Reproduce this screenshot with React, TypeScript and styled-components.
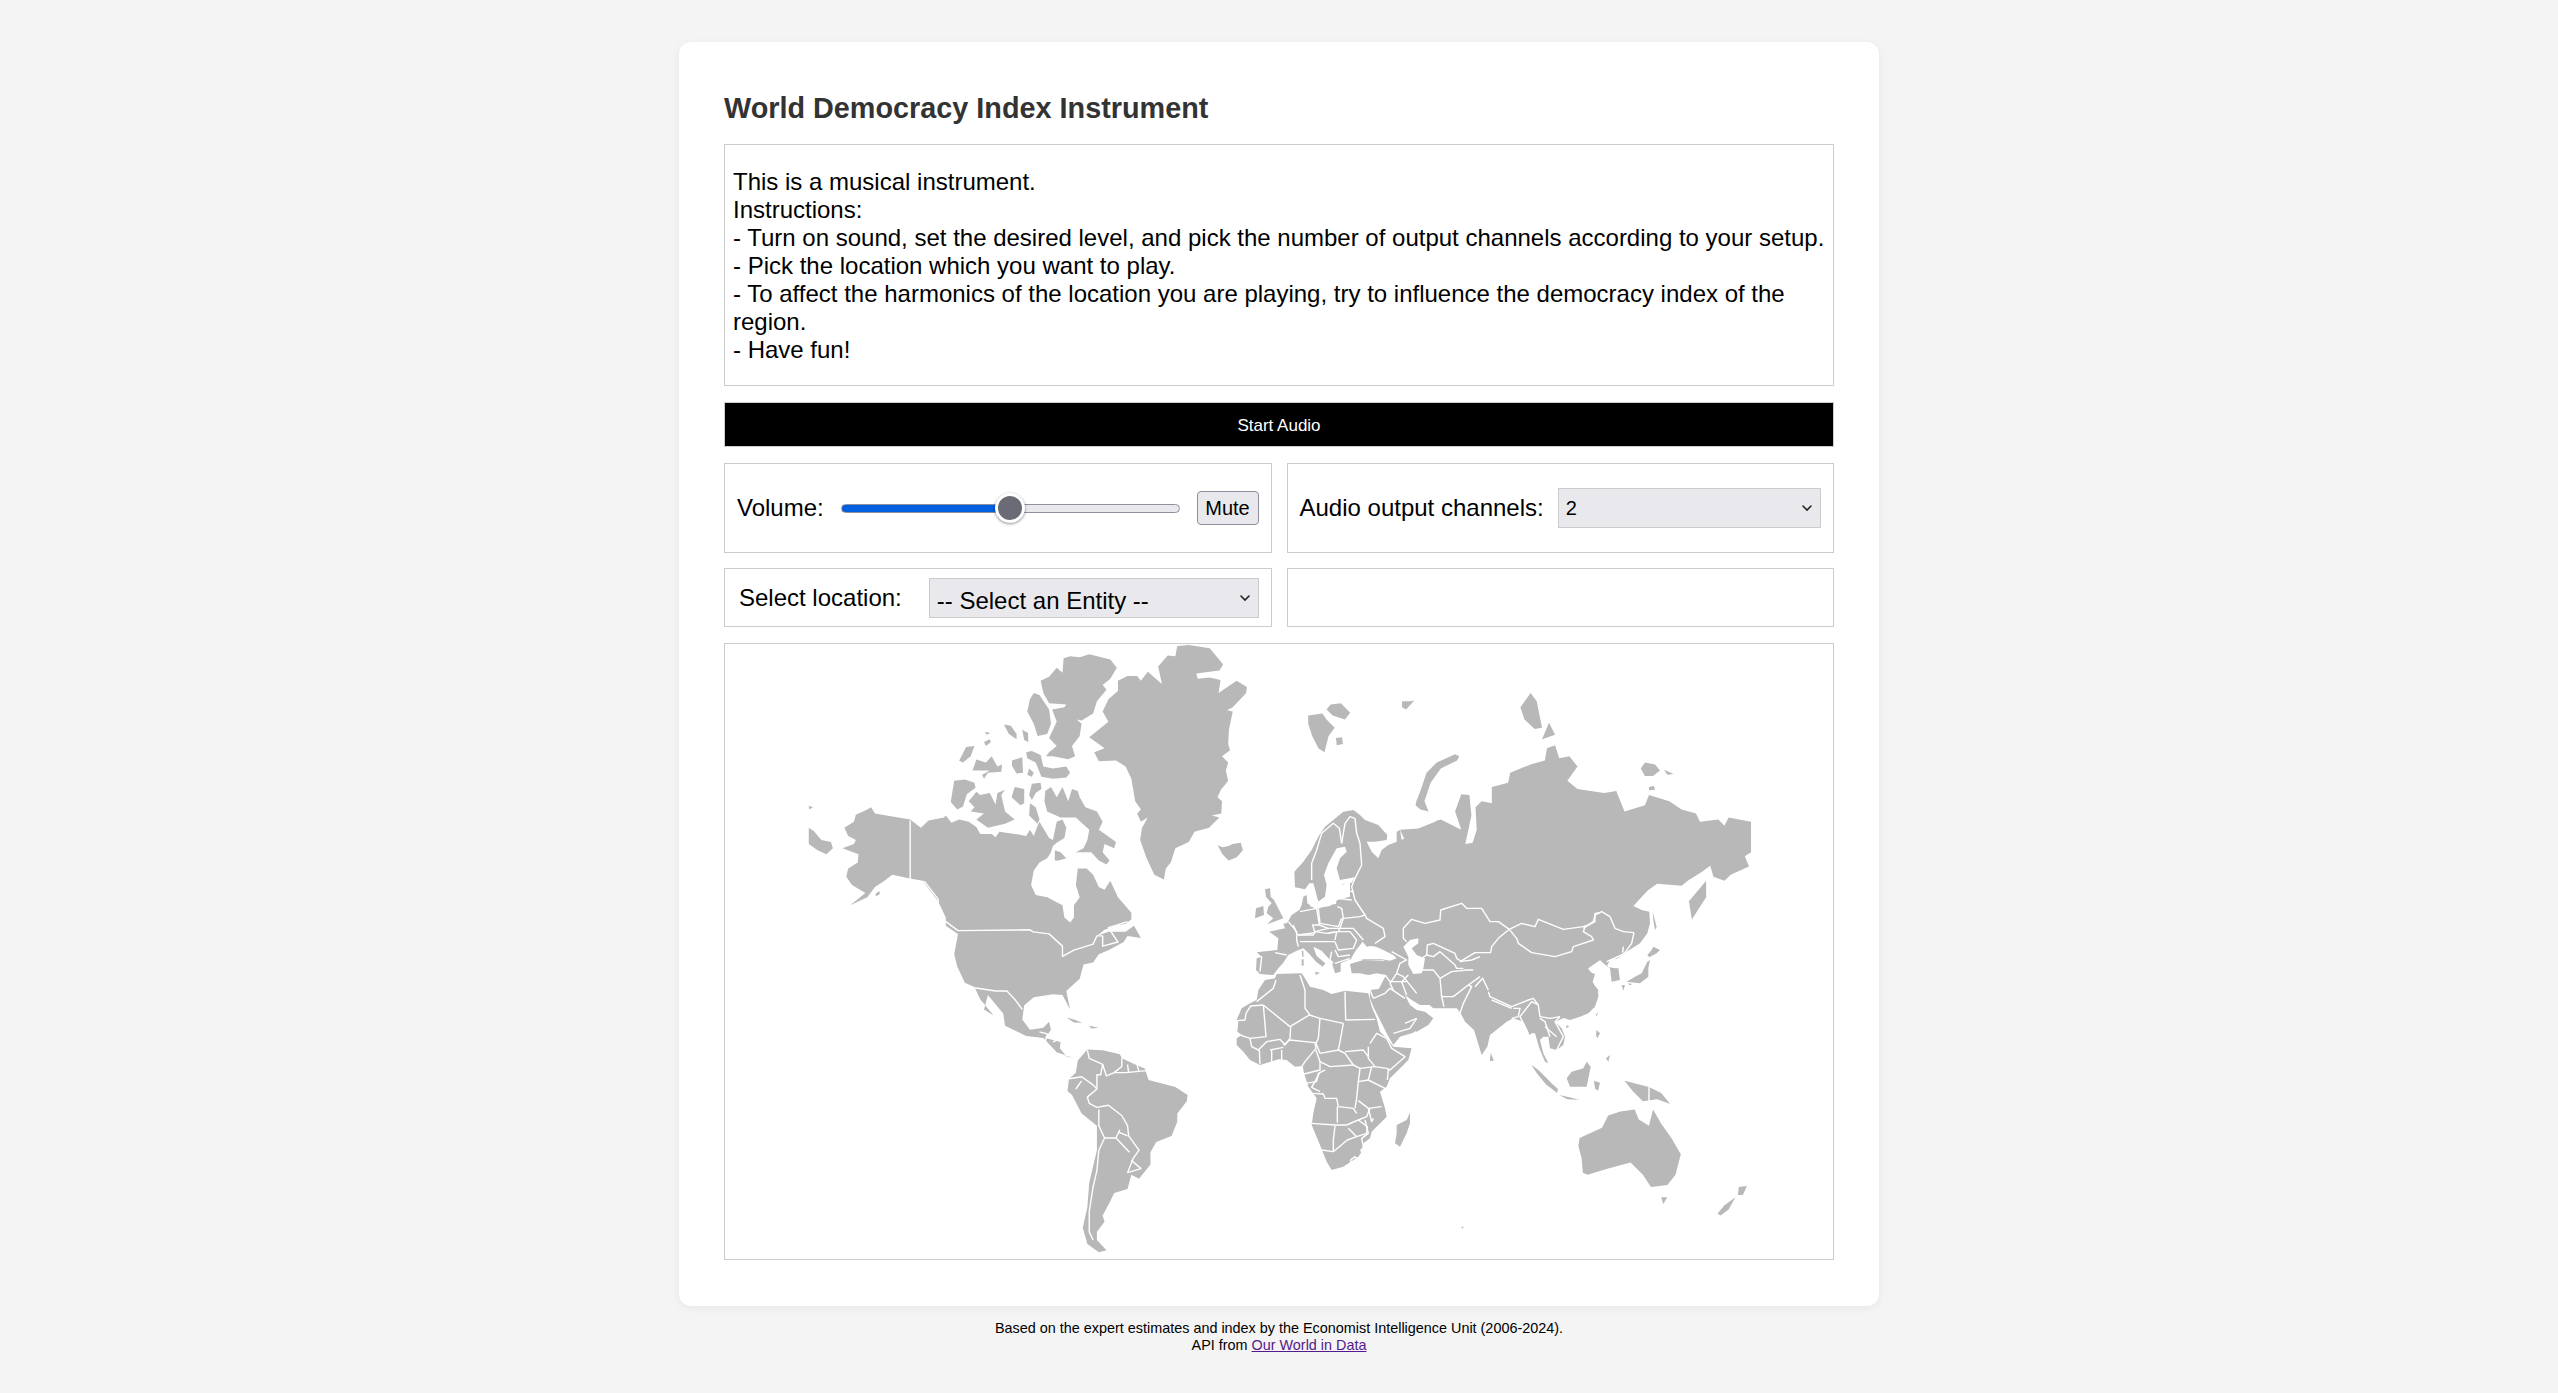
import React from "react";
import styled, { createGlobalStyle } from "styled-components";

const Global = createGlobalStyle`
  html, body { margin: 0; padding: 0; background: #f4f4f4; }
  body { font-family: "Liberation Sans", Arial, sans-serif; color: #000; }
`;

const Page = styled.div`
  display: flex;
  flex-direction: column;
  align-items: center;
  padding-top: 42px;
`;
const Card = styled.main`
  box-sizing: border-box;
  width: 1200px;
  height: 1264px;
  padding: 50px 45px 45px;
  background: #fff;
  border-radius: 12px;
  box-shadow: 0 2px 8px rgba(0, 0, 0, 0.06);
  display: flex;
  flex-direction: column;
  gap: 16px;
`;
const Title = styled.h1`
  margin: 0 0 3px;
  font-size: 28.8px;
  line-height: 33px;
  font-weight: 700;
  color: #333;
`;
const Panel = styled.section`
  box-sizing: border-box;
  border: 1px solid #ccc;
  background: #fff;
`;
const Info = styled(Panel)`
  padding: 23px 8px 22px;
  font-size: 24px;
  line-height: 28px;
  height: 242px;
`;
const StartButton = styled.button`
  box-sizing: border-box;
  height: 45px;
  border: 1px solid #ccc;
  background: #000;
  color: #fff;
  font-family: inherit;
  font-size: 17px;
  padding: 3px 0 0;
`;
const Row = styled.div<{ $pull?: number }>`
  display: grid;
  grid-template-columns: 1fr 1fr;
  gap: 15px;
  margin-bottom: ${(p) => -(p.$pull ?? 0)}px;
`;
const ControlPanel = styled(Panel)<{ $h: number; $gap?: number }>`
  display: flex;
  align-items: center;
  gap: ${(p) => p.$gap ?? 17}px;
  height: ${(p) => p.$h}px;
  padding: 0 12px;
  font-size: 24px;
`;
const Label = styled.label<{ $inset?: number }>`
  white-space: nowrap;
  margin-left: ${(p) => p.$inset ?? 0}px;
  margin-right: ${(p) => (p.$inset ? 10 : 0)}px;
`;
const Slider = styled.input`
  flex: 1;
  min-width: 0;
  height: 30px;
  margin: 0;
  appearance: none;
  -webkit-appearance: none;
  background: transparent;
  &::-webkit-slider-runnable-track {
    height: 9px;
    border-radius: 5px;
    box-sizing: border-box;
    border: 1px solid #8f8f9d;
    background: linear-gradient(to right, #0060df 0 50%, #e9e9ed 50% 100%);
  }
  &::-webkit-slider-thumb {
    -webkit-appearance: none;
    box-sizing: border-box;
    width: 30px;
    height: 30px;
    margin-top: -11.5px;
    border-radius: 50%;
    background: #6b6b76;
    border: 3px solid #fff;
    box-shadow: 0 1px 3px rgba(0, 0, 0, 0.45);
  }
`;
const MuteButton = styled.button`
  box-sizing: border-box;
  width: 62px;
  height: 34px;
  flex: none;
  padding: 1px 0 0;
  border: 1px solid #8f8f9d;
  border-radius: 4px;
  background: #e9e9ed;
  color: #000;
  font-family: inherit;
  font-size: 20px;
`;
const SelectWrap = styled.div`
  position: relative;
  flex: 1;
  min-width: 0;
  height: 40px;
`;
const Select = styled.select<{ $size: number }>`
  box-sizing: border-box;
  width: 100%;
  height: 100%;
  appearance: none;
  -webkit-appearance: none;
  border: 1px solid #ccc;
  border-radius: 0;
  background: #e9e9ed;
  color: #000;
  font-family: inherit;
  font-size: ${(p) => p.$size}px;
  padding: ${(p) => (p.$size > 22 ? "5px" : "0")} 7px 0;
`;
const Chevron = styled.svg`
  position: absolute;
  right: 9px;
  top: 16px;
  width: 10px;
  height: 8px;
  pointer-events: none;
`;
const MapPanel = styled(Panel)`
  height: 617px;
  overflow: hidden;
`;
const MapSvg = styled.svg`
  display: block;
  width: 100%;
  height: 100%;
`;
const Footer = styled.footer`
  margin-top: 14px;
  text-align: center;
  font-size: 14.4px;
  line-height: 17px;
`;
const SourceLink = styled.a`
  color: #551a8b;
`;

type Layer = { t: string; land: string[]; sea?: string[]; lines?: string[] };

const z2 = "translate(720 640) scale(0.38265 0.40816)";
const z3 = "translate(1200 640) scale(0.40816)";
const tile = (x: number, y: number) => `translate(${x} ${y}) scale(0.33333)`;

const layers: Layer[] = [
  {
    t: z2,
    land: [
      "1195,15 1225,12 1280,20 1315,60 1305,75 1245,82 1248,95 1280,92 1308,98 1303,130 1350,100 1377,115 1375,130 1340,165 1325,172 1340,175 1330,220 1328,255 1333,270 1312,285 1328,300 1322,320 1328,345 1315,360 1310,365 1300,385 1312,395 1310,425 1285,430 1305,435 1278,460 1240,470 1225,495 1190,510 1178,545 1165,560 1160,587 1135,575 1115,535 1098,490 1103,460 1118,435 1100,445 1090,425 1100,415 1085,395 1075,340 1060,310 1035,295 990,297 978,275 1005,265 965,238 1015,200 1000,175 1015,145 1040,125 1040,100 1065,88 1090,88 1100,100 1118,78 1155,108 1145,65 1170,38 1190,40",
      "898,45 915,40 940,42 965,35 1020,48 1037,68 1020,95 1000,110 1010,122 985,150 975,180 945,197 932,195 945,205 940,235 920,260 928,285 910,292 870,285 852,285 860,275 880,260 860,240 880,200 868,170 900,165 905,158 860,155 845,130 838,100 860,90 880,68 895,80",
      "820,130 835,135 860,170 865,205 855,230 830,235 820,205 803,175 810,145",
      "742,207 760,210 775,230 775,243 755,230",
      "790,220 805,228 806,250 795,245",
      "692,225 707,228 697,232",
      "690,250 705,243 708,250 695,260",
      "643,262 665,260 655,285 635,300 625,296",
      "670,293 695,300 710,285 725,310 737,305 735,323 700,325 690,340 685,330 705,320 660,320",
      "763,295 790,287 792,325 775,327 763,308",
      "808,315 820,325 815,335 803,330",
      "800,275 815,272 838,282 845,310 870,315 905,310 915,325 905,337 870,340 840,335 825,300 803,290",
      "612,345 640,342 665,350 668,362 645,378 635,408 620,415 603,397",
      "650,395 670,372 680,380 705,375 720,403 725,375 745,367 735,380 745,420 770,440 745,450 700,460 670,440 690,425 655,420 665,410",
      "815,352 838,350 840,365 825,375 815,392 808,380",
      "770,360 795,365 795,400 785,405 762,385",
      "810,400 825,410 835,440 830,450 808,430",
      "850,370 865,360 880,385 895,360 910,395 920,365 935,370 940,385 955,410 985,420 1000,445 990,465 1035,495 1030,510 1005,500 1000,520 1018,540 1010,550 990,540 970,520 930,520 950,510 960,490 965,465 930,435 890,435 855,420 848,395",
      "875,515 890,520 905,535 885,540 875,540",
      "325,460 350,445 355,428 385,415 395,410 405,425 435,430 497,440 525,460 545,442 585,435 590,430 605,448 625,440 650,445 670,458 680,475 710,475 720,483 730,470 770,475 800,480 810,465 820,480 830,455 835,445 860,485 870,490 880,445 895,440 905,460 900,485 880,497 870,505 865,520 855,535 835,545 820,565 813,600 825,625 855,630 895,650 900,680 915,692 925,680 925,650 940,630 930,600 935,560 958,560 975,575 990,605 1005,612 1020,590 1040,630 1075,668 1075,685 1060,695 1035,700 1005,710 985,725 1015,715 1060,715 1082,700 1100,730 1065,725 1055,740 1015,760 990,770 975,790 950,795 940,830 905,860 915,905 895,870 870,868 820,875 795,895 790,930 810,955 845,950 860,935 865,955 850,975 890,985 888,1000 905,1020 925,1025 880,1010 845,975 800,970 745,945 740,915 700,870 690,905 715,920 680,880 665,850 640,840 620,800 612,770 622,720 590,700 590,680 570,640 530,590 500,585 450,575 430,590 405,605 385,630 340,650 380,620 345,600 330,580 335,560 360,545 362,525 320,510 350,500 355,490 335,480",
      "232,460 245,468 265,490 290,495 295,510 278,525 255,515 232,500",
      "232,406 243,410 233,415",
      "406,622 416,615 418,622 408,628",
      "905,925 925,930 947,938 925,937",
      "965,945 990,950 970,952",
      "935,1030 960,1003 1000,1005 1045,1015 1050,1025 1085,1040 1110,1050 1120,1078 1190,1095 1222,1115 1220,1130 1195,1160 1195,1180 1180,1215 1140,1230 1125,1255 1125,1285 1095,1320 1075,1310 1065,1345 1030,1355 1020,1375 1000,1410 1005,1425 985,1450 985,1470 1010,1495 990,1500 960,1480 948,1440 960,1390 965,1330 985,1250 985,1190 945,1160 920,1115 908,1105 912,1075 930,1060",
    ],
    sea: ["935,468 945,472 945,483 937,485"],
    lines: [
      "497,442 497,585 520,598 535,592 570,635 572,660 590,690 622,712 810,710 818,715 860,720 895,750 895,775 925,760 975,745 985,725 1000,725 1000,750 1040,740 1015,705 1065,690",
      "665,852 720,860 750,860 770,880 790,905",
      "835,960 855,965 850,985",
      "870,985 890,975",
      "960,1005 965,1025 1000,1040 995,1065 985,1065 985,1100 960,1120 965,1135 985,1145 1015,1140 1050,1165 1065,1190 1068,1215 1095,1250 1080,1270 1065,1305",
      "1000,1040 1010,1068 1030,1060 1050,1045 1050,1025",
      "1030,1060 1060,1060 1115,1055",
      "1065,1040 1068,1060",
      "1090,1040 1095,1058",
      "912,1075 945,1070 975,1090 985,1100",
      "930,1100 945,1080",
      "990,1150 990,1190 1005,1220 990,1250 985,1300 975,1340 965,1400 965,1450 975,1470",
      "1005,1220 1035,1220 1070,1255",
      "1040,1205 1065,1215",
      "1035,1220 1045,1200",
      "1065,1305 1100,1295 1075,1275",
    ],
  },
  {
    t: z3,
    land: [
      "640,465 625,420 640,378 660,380 665,430 650,500 668,497 678,465 675,410 690,395 715,400 715,360 755,350 760,325 810,305 845,295 850,265 870,258 880,290 905,285 925,310 900,345 925,365 990,375 1020,370 1040,420 1090,405 1100,380 1150,395 1180,415 1215,425 1225,445 1270,440 1285,455 1295,435 1350,445 1350,520 1335,530 1345,555 1300,575 1285,590 1258,580 1250,553 1230,568 1195,590 1180,602 1120,597 1095,615 1062,650 1000,700 600,700 490,465 535,462 590,440",
      "1198,640 1240,590 1240,630 1205,685",
      "265,185 300,180 310,195 330,215 315,235 305,275 290,265 275,235 265,205",
      "310,170 320,158 345,155 368,178 355,195 325,185",
      "333,240 348,238 350,255 335,258",
      "495,150 515,150 525,148 505,170 495,165",
      "530,395 540,370 555,325 580,300 625,280 635,285 630,295 590,315 565,350 555,380 550,395 560,420 540,415 528,405",
      "785,165 810,130 825,150 838,215 820,218 795,195",
      "838,243 855,203 870,232",
      "1080,315 1090,300 1115,305 1127,320 1110,333 1090,333",
      "1137,318 1160,328 1145,330",
      "1100,360 1112,358 1115,367 1100,368",
      "43,503 55,508 70,505 80,500 100,497 105,515 90,532 70,540 55,525",
      "812,1042 835,1060 860,1085 877,1100 875,1110 850,1090 825,1060",
      "880,1115 905,1120 930,1127 900,1125",
      "965,1080 980,1085 975,1105 968,1098",
      "1040,1080 1100,1095 1130,1110 1152,1137 1120,1125 1085,1130 1060,1105",
      "930,1220 985,1195 1000,1165 1030,1155 1065,1150 1075,1175 1100,1190 1110,1150 1130,1185 1155,1220 1178,1260 1165,1310 1145,1335 1105,1340 1085,1310 1080,1305 1055,1280 1000,1295 950,1310 938,1305 935,1270 927,1240",
      "1130,1365 1145,1365 1135,1382",
      "1320,1340 1340,1338 1330,1360 1318,1360",
      "1312,1365 1295,1395 1275,1410 1268,1405 1285,1385",
      "712,1012 720,1030 710,1032",
      "640,1437 647,1439 642,1442",
    ],
    lines: ["1100,1095 1100,1130"],
  },
  {
    t: tile(1250, 800),
    land: [
      "133,215 160,185 185,150 205,110 225,80 250,60 280,35 310,30 330,45 345,60 385,75 412,105 410,120 375,125 350,125 365,155 385,175 395,150 415,135 440,125 440,95 450,90 455,120 490,100 520,85 565,60 600,80 600,420 300,420 300,240 205,305 190,250 178,250 165,268 135,262",
      "160,290 170,285 172,310 185,318 200,325 240,318 262,300 300,290 450,330 470,420 465,480 330,480 300,478 272,490 272,515 255,520 245,485 215,452 190,440 200,468 226,490 218,500 198,485 178,462 160,445 140,452 115,465 100,488 85,505 70,525 30,522 18,510 20,475 35,470 20,457 82,450 85,415 58,395 105,385 100,372 112,368 125,345 148,330 155,315",
      "300,492 340,480 400,482 435,470 600,470 600,570 385,570 408,525 380,520 355,525 330,520 305,520",
      "45,268 60,265 62,290 72,300 90,335 100,355 60,370 52,372 70,355 50,340 55,320 65,310 48,290",
      "18,325 40,318 42,345 15,355",
      "155,452 160,452 161,470 157,470",
      "155,478 161,478 161,497 155,497",
      "195,515 210,518 198,525",
    ],
    sea: [
      "205,305 225,290 230,255 222,225 235,190 260,145 285,140 290,155 270,175 260,205 270,240 315,232 305,248 278,252 280,275 262,285 258,312 235,315 200,327 180,318 178,295 190,290",
      "305,472 320,448 338,425 350,440 362,438 378,440 395,448 430,465 440,475 420,482 395,478 340,478 300,490",
    ],
    lines: [
      "185,240 185,190 200,150 215,100 250,70 268,85 275,130",
      "275,130 280,100 285,70 300,50 315,55 320,100 330,130 335,195 315,235 305,260 315,300 345,345",
      "278,272 310,275",
      "262,295 305,300",
      "262,320 275,325 280,355 330,350 345,345 350,355 400,385 405,410 375,430",
      "280,355 270,385 310,385 340,420",
      "205,325 210,370 265,380 275,355",
      "150,335 200,325 208,375 188,375 195,398 145,405 140,400 130,375",
      "115,365 140,395 140,420 145,440",
      "75,458 110,465",
      "22,470 35,470 30,515",
      "150,425 190,425 215,425 255,425",
      "145,405 190,405 195,395 230,400 255,395",
      "208,375 235,385 195,395",
      "235,385 270,385 265,395 235,400",
      "260,395 255,420",
      "265,395 300,395 320,420 310,445 265,450 255,425",
      "255,450 265,470 300,465",
      "245,455 240,480 250,490",
      "255,490 300,475",
      "425,455 470,480 450,490 440,520",
      "440,520 460,530 500,580",
      "405,525 420,545 470,545",
    ],
  },
  {
    t: tile(1230, 970),
    land: [
      "20,150 35,115 60,100 80,90 85,60 105,30 135,25 140,12 215,10 222,20 240,50 280,60 305,72 345,62 400,68 415,70 425,110 440,145 450,185 470,205 490,230 545,235 535,270 515,290 480,325 470,350 450,365 465,415 470,440 445,465 425,485 420,505 400,520 395,545 385,560 340,590 305,600 290,575 270,525 245,465 250,430 260,385 235,350 222,310 218,288 195,290 170,270 145,268 90,285 60,270 40,245 20,225 20,205 35,195 22,185 25,155",
      "420,60 500,50 510,50 525,75 540,105 560,120 585,125 610,145 595,165 560,185 510,200 490,225 470,190 450,150 430,110 420,85",
      "540,428 530,450 500,465 500,490 495,520 510,530 530,490 540,460",
    ],
    lines: [
      "20,152 45,150 48,130 62,108 100,105",
      "80,95 130,55 138,30",
      "100,105 180,170",
      "100,105 108,200 60,205",
      "20,190 30,195 60,205 65,230 85,240 110,215 150,208 165,225 180,205 182,170",
      "180,170 238,135 270,145 265,205",
      "210,15 225,60 225,115 240,135",
      "345,65 347,150",
      "270,145 340,160",
      "347,150 435,148",
      "340,160 330,215 325,240",
      "265,205 258,220 270,250",
      "160,225 180,210 255,218 258,235 225,275 215,290",
      "125,240 125,280",
      "155,240 155,270 165,275",
      "88,240 90,282",
      "120,240 160,232",
      "270,250 325,240",
      "258,240 270,275 270,300 222,312",
      "270,275 300,290 370,285 345,250 325,240",
      "345,245 400,240 415,260",
      "415,230 415,265 435,290 390,295 370,285",
      "420,220 440,190 470,205 485,235 525,260 480,300 470,295 435,290",
      "475,300 472,330",
      "425,290 415,330 465,355",
      "390,295 385,335 415,330",
      "225,340 260,335 265,310 285,300",
      "268,310 245,352 270,365",
      "250,370 280,372 285,385 320,385 325,410 370,415 380,430",
      "385,335 380,385 375,415",
      "385,392 415,415 455,410",
      "322,410 322,458",
      "245,460 315,465 350,465",
      "350,465 385,450 410,440 420,415",
      "415,415 425,455 430,445",
      "405,450 415,490 395,505 400,530",
      "385,450 412,470 410,490 380,500 355,475",
      "315,468 310,510 310,545 275,540",
      "310,545 352,510 380,500",
      "360,572 375,560 382,568 370,578 360,572",
      "392,540 398,535 402,542 396,548 392,540",
      "435,40 420,60 430,85",
      "490,60 480,40 500,10",
      "430,85 465,70 480,55 525,85",
      "525,160 560,145",
      "490,190 540,175 560,145",
      "545,195 558,185",
    ],
  },
  {
    t: tile(1400, 890),
    land: [
      "0,290 15,315 35,330 60,345 88,345 100,355 125,355 170,355 182,370 195,395 222,420 245,495 262,470 270,435 320,395 340,385 370,395 388,435 395,430 405,430 418,475 435,515 445,520 430,490 420,450 430,440 445,440 450,475 470,480 490,465 495,440 485,415 465,395 490,385 525,380 560,370 590,330 595,300 570,270 565,235 600,210 600,0 0,0",
      "500,565 515,545 550,535 560,515 572,530 560,590 510,590",
      "395,525 415,540 440,565 460,590 465,600 440,585 415,555",
    ],
    sea: ["10,170 30,150 55,145 55,160 35,175 50,195 75,205 70,235 65,250 40,252 25,225 25,200"],
    lines: [
      "10,115 35,88 75,100 120,90 122,60 185,40 200,55 245,55 270,95 295,95 328,118",
      "328,118 295,145 275,170 272,188 225,188 205,200 180,215",
      "328,118 365,100 405,110 415,88 445,100 490,118 550,110 565,105 585,95 585,70 600,68",
      "328,118 350,145 355,160 395,188 465,200 515,185 520,170 580,150 575,140 550,125 555,110",
      "10,115 10,145 20,155",
      "65,205 80,195 82,165 100,160 165,190 170,205 185,215",
      "80,195 100,200 120,185 165,225 170,235 190,235",
      "65,240 100,240 120,265",
      "120,265 125,320 160,320 205,285 240,260",
      "120,265 155,245 200,240 220,240",
      "125,320 132,350",
      "205,285 215,290 190,340 180,370",
      "225,290 248,265 265,300",
      "20,315 5,275 25,255",
      "265,305 270,320 335,350 385,330 400,325 415,345 420,380 450,385 480,380",
      "275,330 335,355",
      "340,355 360,355 355,380 335,385",
      "415,345 395,335 360,380 385,430",
      "420,385 435,395 450,440",
      "480,380 465,395 490,440 470,480",
      "435,410 470,440",
      "180,215 215,210 240,200",
    ],
  },
  {
    t: tile(1560, 880),
    land: [
      "0,0 280,12 220,78 245,90 268,95 270,130 262,160 240,190 195,218 175,235 150,240 140,260 165,265 175,265 180,300 155,305 150,265 130,250 120,240 95,255 82,265 95,278 105,282 98,305 115,340 115,350 105,380 85,400 60,410 30,420 0,410",
      "270,240 265,265 265,290 240,310 200,305 195,308 225,290 245,280 262,245",
      "280,200 300,210 290,220 268,232 262,225 275,210",
      "278,95 290,140 285,150 280,120",
      "185,316 195,315 190,332",
      "205,310 218,312 208,316",
      "110,450 120,460 112,475 108,465",
      "115,395 110,410 108,405",
      "150,525 145,545 138,535",
      "20,435 28,440 18,445",
    ],
    lines: [
      "222,158 215,190 195,218",
      "222,158 190,155 165,145 150,110 125,95 105,105 100,125 70,145",
      "195,218 185,225 140,245",
      "190,200 188,218",
    ],
  },
];

const WorldMap = () => (
  <MapSvg viewBox="725 644 1108 615" preserveAspectRatio="none" aria-label="World map">
    {layers.map((l, i) => (
      <g key={i} transform={l.t}>
        {l.land.map((p, j) => (
          <polygon key={j} points={p} fill="#b8b8b8" />
        ))}
      </g>
    ))}
    {layers.map((l, i) => (
      <g key={i} transform={l.t}>
        {l.sea?.map((p, j) => (
          <polygon key={j} points={p} fill="#fff" />
        ))}
        {l.lines?.map((p, j) => (
          <polyline
            key={j}
            points={p}
            fill="none"
            stroke="#fff"
            strokeWidth={1.4}
            strokeLinejoin="round"
            vectorEffect="non-scaling-stroke"
          />
        ))}
      </g>
    ))}
  </MapSvg>
);

const Caret = () => (
  <Chevron viewBox="0 0 10 8">
    <path d="M1 2 L5 6 L9 2" fill="none" stroke="#222" strokeWidth="1.6" strokeLinecap="round" />
  </Chevron>
);

export default function App() {
  return (
    <Page>
      <Global />
      <Card>
        <Title>World Democracy Index Instrument</Title>
        <Info>
          This is a musical instrument.
          <br />
          Instructions:
          <br />- Turn on sound, set the desired level, and pick the number of output channels according to your setup.
          <br />- Pick the location which you want to play.
          <br />- To affect the harmonics of the location you are playing, try to influence the democracy index of the region.
          <br />- Have fun!
        </Info>
        <StartButton>Start Audio</StartButton>
        <Row $pull={1}>
          <ControlPanel $h={90}>
            <Label>Volume:</Label>
            <Slider type="range" min={0} max={100} defaultValue={50} />
            <MuteButton>Mute</MuteButton>
          </ControlPanel>
          <ControlPanel $h={90} $gap={14}>
            <Label>Audio output channels:</Label>
            <SelectWrap>
              <Select $size={20} defaultValue="2">
                <option>1</option>
                <option>2</option>
              </Select>
              <Caret />
            </SelectWrap>
          </ControlPanel>
        </Row>
        <Row>
          <ControlPanel $h={59}>
            <Label $inset={2}>Select location:</Label>
            <SelectWrap>
              <Select $size={24}>
                <option>-- Select an Entity --</option>
              </Select>
              <Caret />
            </SelectWrap>
          </ControlPanel>
          <ControlPanel $h={59} />
        </Row>
        <MapPanel>
          <WorldMap />
        </MapPanel>
      </Card>
      <Footer>
        Based on the expert estimates and index by the Economist Intelligence Unit (2006-2024).
        <br />
        API from <SourceLink href="#">Our World in Data</SourceLink>
      </Footer>
    </Page>
  );
}
